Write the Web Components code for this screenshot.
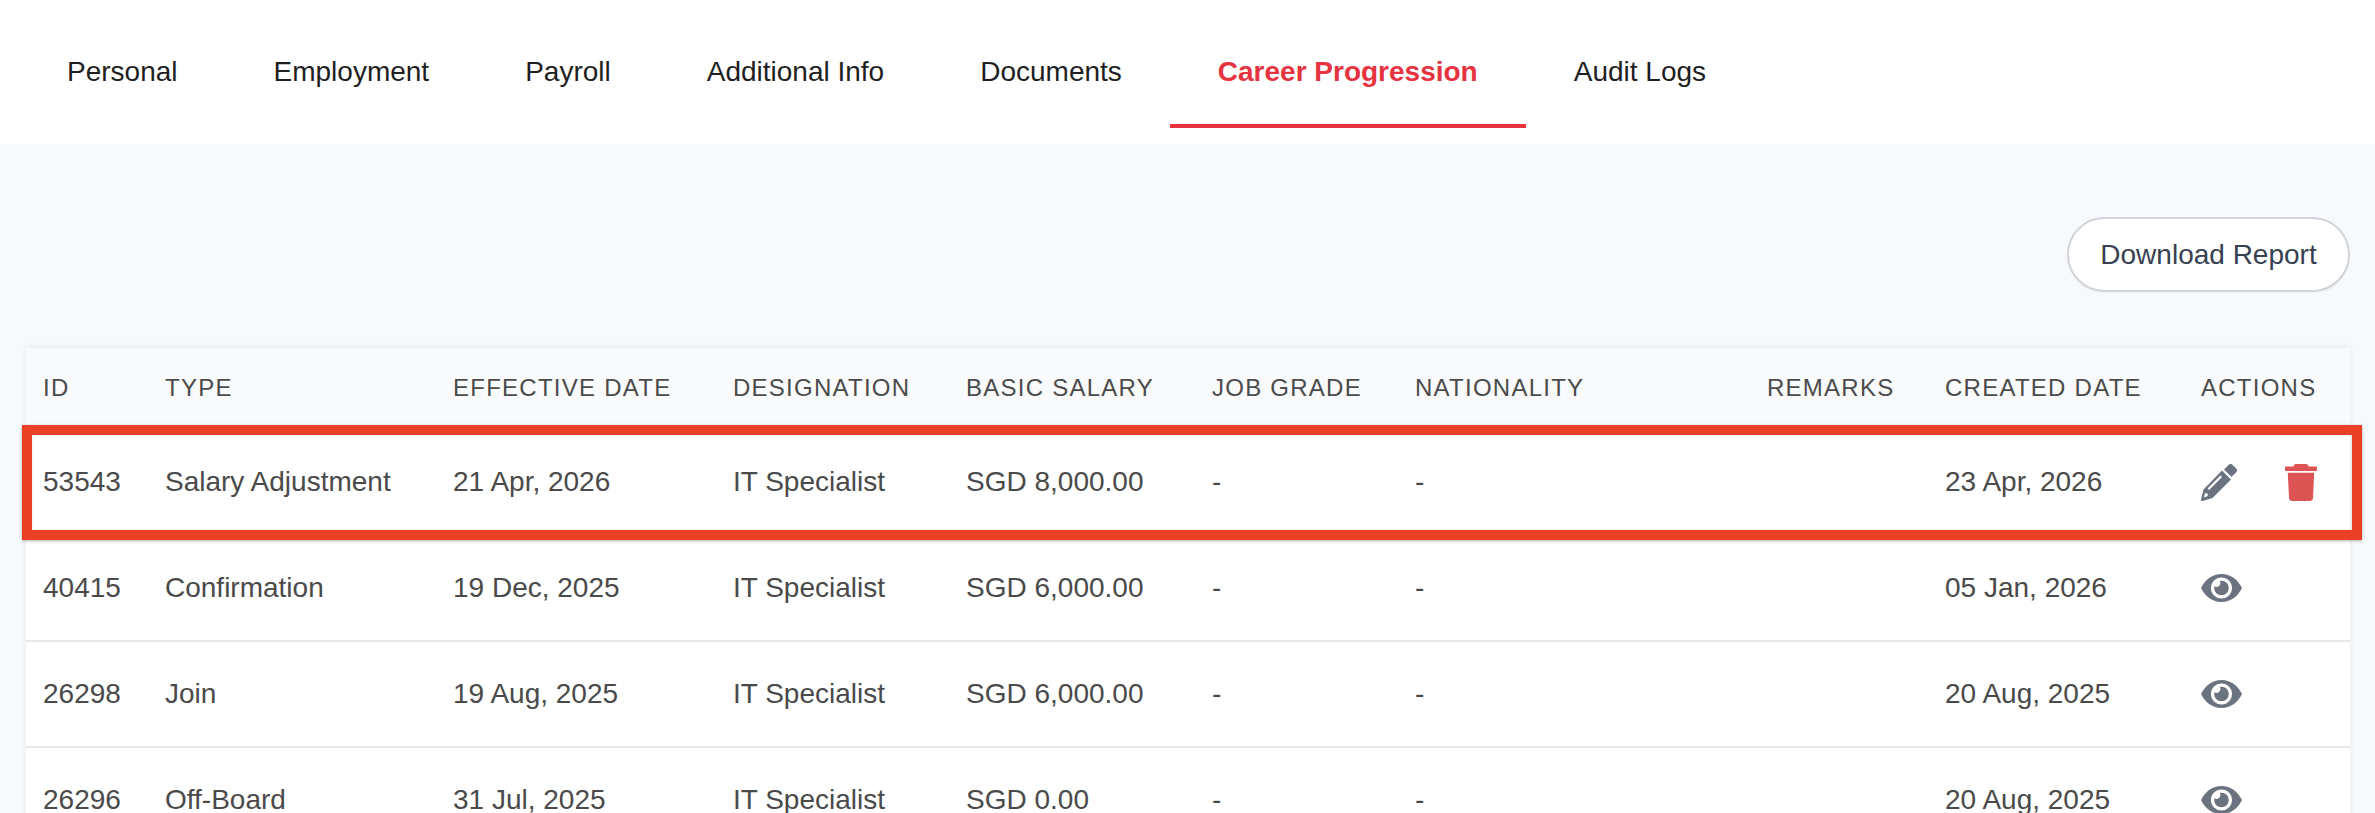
<!DOCTYPE html>
<html>
<head>
<meta charset="utf-8">
<style>
    html, body { margin: 0; height: 813px; overflow: hidden; background: #f8f9fc; }
    body { font-family: "Liberation Sans", Arial, sans-serif; }
</style>
</head>
<body>
<profile-page>
    <tab-bar slot="tabs">
        <tab-item>Personal</tab-item>
        <tab-item>Employment</tab-item>
        <tab-item>Payroll</tab-item>
        <tab-item>Additional Info</tab-item>
        <tab-item>Documents</tab-item>
        <tab-item active>Career Progression</tab-item>
        <tab-item>Audit Logs</tab-item>
    </tab-bar>
    <pill-button slot="action">Download Report</pill-button>
    <career-table slot="table"></career-table>
</profile-page>

<script>
const PENCIL = `<svg width="36" height="37" viewBox="0 0 36 37"><path fill="#6b7280" d="M23 5.500 27.500 1a3 3 0 0 1 4.200 0L35 4.300a3 3 0 0 1 0 4.200L30.500 13Z"/><path fill="#6b7280" fill-rule="evenodd" d="M21 6.500 30 15.500 11.500 34 1.500 37A1.200 1.200 0 0 1 0 35.500L2.500 25.500ZM19.500 11.500 6.500 24.500 8 26 21 13ZM3.800 29.500 6.300 29l.5 3-3.800 1.500Z"/></svg>`;
const TRASH = `<svg width="32" height="37" viewBox="0 0 32 37"><path fill="#dc5454" d="M11 0h10c1 0 1.800.6 2.200 1.500l.4.900h7.200c.7 0 1.200.6 1.200 1.300v2.300c0 .6-.5 1.100-1.200 1.100H1.200C.5 7.100 0 6.600 0 6V3.700c0-.7.500-1.300 1.200-1.300h7.200l.4-.9C9.200.6 10 0 11 0ZM2.800 8.800h26.400l-1.200 25.100c-.1 1.700-1.500 3.100-3.300 3.100H7.300c-1.800 0-3.200-1.400-3.300-3.100Z"/></svg>`;
const EYE = `<svg width="41" height="28" viewBox="0 0 41 28"><path fill="#6b7280" fill-rule="evenodd" d="M20.500 0C29.500 0 36.800 5.400 41 14c-4.200 8.600-11.500 14-20.500 14S4.200 22.600 0 14C4.200 5.400 11.500 0 20.500 0Zm0 3.400a10.600 10.600 0 1 0 0 21.200 10.600 10.600 0 0 0 0-21.200Z"/><path fill="#6b7280" d="M20.500 6.700a7.300 7.300 0 1 1-7.300 7.300c0-.6.100-1.200.2-1.700a3.900 3.900 0 0 0 5.400-5.300c.5-.2 1.100-.3 1.700-.3Z"/></svg>`;

const tabTemplate = document.createElement("template");
tabTemplate.innerHTML = `
    <style>
        :host {
            display: flex;
            align-items: center;
            height: 104px;
            padding: 20px 48px 0 48px;
            border-bottom: 4px solid transparent;
            font-size: 28px;
            color: #1f1f1f;
            white-space: nowrap;
        }
        :host([active]) {
            color: #e5343f;
            font-weight: 700;
            border-bottom-color: #e5343f;
        }
    </style>
    <slot></slot>
`;

class TabItem extends HTMLElement {
    constructor() {
        super();
        this.attachShadow({mode: "open"}).appendChild(tabTemplate.content.cloneNode(true));
    }
}

const barTemplate = document.createElement("template");
barTemplate.innerHTML = `
    <style>
        :host {
            display: flex;
            height: 144px;
            padding: 0 19px;
            box-sizing: border-box;
            background: #ffffff;
        }
    </style>
    <slot></slot>
`;

class TabBar extends HTMLElement {
    constructor() {
        super();
        this.attachShadow({mode: "open"}).appendChild(barTemplate.content.cloneNode(true));
    }
}

const buttonTemplate = document.createElement("template");
buttonTemplate.innerHTML = `
    <style>
        :host {
            display: inline-flex;
            align-items: center;
            justify-content: center;
            box-sizing: border-box;
            width: 283px;
            height: 75px;
            border: 2px solid #d1d5db;
            border-radius: 38px;
            background: #ffffff;
            box-shadow: 0 1px 2px rgba(0, 0, 0, 0.05);
            font-size: 28px;
            color: #374151;
        }
    </style>
    <slot></slot>
`;

class PillButton extends HTMLElement {
    constructor() {
        super();
        this.attachShadow({mode: "open"}).appendChild(buttonTemplate.content.cloneNode(true));
    }
}

const COLUMNS = ["ID", "Type", "Effective Date", "Designation", "Basic Salary", "Job Grade", "Nationality", "Remarks", "Created Date", "Actions"];
const ROWS = [
    {id: "53543", type: "Salary Adjustment", date: "21 Apr, 2026", salary: "SGD 8,000.00", created: "23 Apr, 2026", editable: true},
    {id: "40415", type: "Confirmation", date: "19 Dec, 2025", salary: "SGD 6,000.00", created: "05 Jan, 2026"},
    {id: "26298", type: "Join", date: "19 Aug, 2025", salary: "SGD 6,000.00", created: "20 Aug, 2025"},
    {id: "26296", type: "Off-Board", date: "31 Jul, 2025", salary: "SGD 0.00", created: "20 Aug, 2025"},
];

const tableTemplate = document.createElement("template");
tableTemplate.innerHTML = `
    <style>
        :host {
            display: block;
            position: relative;
            background: #ffffff;
            box-shadow: 0 0 6px rgba(0, 0, 0, 0.08);
            --cols: 122px 288px 280px 233px 246px 203px 352px 178px 256px 1fr;
        }
        .row {
            display: grid;
            grid-template-columns: var(--cols);
            padding-left: 17px;
            align-items: center;
            box-sizing: border-box;
        }
        .head {
            height: 82px;
            padding-bottom: 2px;
            background: #f9fafc;
            font-size: 24px;
            letter-spacing: 1.25px;
            color: #4b4b4b;
            text-transform: uppercase;
        }
        .body {
            height: 106px;
            border-bottom: 2px solid #e5e7eb;
            font-size: 28px;
            color: #4a4a4a;
        }
        .actions {
            display: flex;
            align-items: center;
            gap: 48px;
        }
        .actions svg { display: block; }
        #highlight {
            position: absolute;
            left: -4px;
            right: -12px;
            top: 77px;
            height: 115px;
            box-sizing: border-box;
            border: 10px solid #ea4025;
            box-shadow: 0 1px 3px rgba(0, 0, 0, 0.3), inset 0 0 2px rgba(0, 0, 0, 0.15);
        }
    </style>
    <div class="row head" id="head"></div>
    <div id="rows"></div>
    <div id="highlight"></div>
`;

class CareerTable extends HTMLElement {
    constructor() {
        super();
        this.attachShadow({mode: "open"}).appendChild(tableTemplate.content.cloneNode(true));

        const head = this.shadowRoot.getElementById("head");
        for (const col of COLUMNS) {
            const elem = document.createElement("div");
            elem.textContent = col;
            head.appendChild(elem);
        }

        const rows = this.shadowRoot.getElementById("rows");
        for (const row of ROWS) {
            const elem = document.createElement("div");
            elem.className = "row body";
            const cells = [row.id, row.type, row.date, "IT Specialist", row.salary, "-", "-", "", row.created];
            for (const text of cells) {
                const cell = document.createElement("div");
                cell.textContent = text;
                elem.appendChild(cell);
            }
            const actions = document.createElement("div");
            actions.className = "actions";
            actions.innerHTML = row.editable ? PENCIL + TRASH : EYE;
            elem.appendChild(actions);
            rows.appendChild(elem);
        }
    }
}

const pageTemplate = document.createElement("template");
pageTemplate.innerHTML = `
    <style>
        :host { display: block; }
        #content {
            display: flex;
            flex-direction: column;
            padding: 73px 25px 0 26px;
        }
        #toolbar {
            display: flex;
            justify-content: flex-end;
            margin-bottom: 56px;
        }
    </style>
    <slot name="tabs"></slot>
    <div id="content">
        <div id="toolbar"><slot name="action"></slot></div>
        <slot name="table"></slot>
    </div>
`;

class ProfilePage extends HTMLElement {
    constructor() {
        super();
        this.attachShadow({mode: "open"}).appendChild(pageTemplate.content.cloneNode(true));
    }
}

customElements.define("tab-item", TabItem);
customElements.define("tab-bar", TabBar);
customElements.define("pill-button", PillButton);
customElements.define("career-table", CareerTable);
customElements.define("profile-page", ProfilePage);
</script>
</body>
</html>
